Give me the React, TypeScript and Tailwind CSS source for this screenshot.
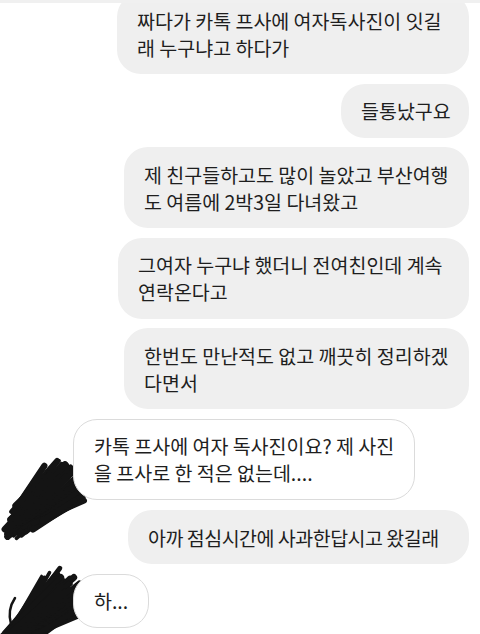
import React from 'react';

type Seg = { x1: number; y1: number; x2: number; y2: number; w: number };

// tiny deterministic rng so the scribble looks the same every render
const rng = (seed: number) => {
  let s = seed;
  return () => {
    s = (s * 9301 + 49297) % 233280;
    return s / 233280;
  };
};

const makeScribble = (seed: number, ax: number, ay: number, bx: number, by: number, half: number, count: number): Seg[] => {
  const r = rng(seed);
  const dx = bx - ax;
  const dy = by - ay;
  const len = Math.hypot(dx, dy);
  const ux = dx / len;
  const uy = dy / len;
  const nx = -uy;
  const ny = ux;
  const out: Seg[] = [];
  for (let i = 0; i < count; i++) {
    const t = -half + (2 * half * i) / (count - 1);
    const edge = Math.abs(t) / half;
    // the lower-left end tapers more than the upper-right one
    const s1 = r() * len * 0.12 + edge * edge * len * 0.3;
    const s2 = len - (r() * len * 0.18 + edge * edge * len * 0.1) + r() * 10;
    const t1 = t * 0.6 + (r() - 0.5) * 8;
    const t2 = t * 1.1 + (r() - 0.5) * 10;
    out.push({
      x1: ax + ux * s1 + nx * t1,
      y1: ay + uy * s1 + ny * t1,
      x2: ax + ux * s2 + nx * t2,
      y2: ay + uy * s2 + ny * t2,
      w: 3 + r() * 4,
    });
  }
  return out;
};

const scribbleA = makeScribble(7, 6, 96, 74, 34, 22, 46);
const scribbleB = makeScribble(31, 4, 96, 74, 34, 23, 46);

const Scribble = ({ segs, extra }: { segs: Seg[]; extra?: React.ReactNode }) => (
  <svg width="95" height="120" viewBox="0 0 95 120" className="block">
    {segs.map((s, i) => (
      <line
        key={i}
        x1={s.x1}
        y1={s.y1}
        x2={s.x2}
        y2={s.y2}
        stroke="#141414"
        strokeWidth={s.w}
        strokeLinecap="round"
      />
    ))}
    {extra}
  </svg>
);

const Sent = ({ lines, w, className = '' }: { lines: string[]; w?: string; className?: string }) => (
  <div className={`self-end bg-[#efefef] rounded-[24px] px-5 py-[13.5px] leading-[27px] ${w ?? ''} ${className}`}>
    {lines.map((l, i) => (
      <div key={i} className="whitespace-nowrap">
        {l}
      </div>
    ))}
  </div>
);

export default function App() {
  return (
    <div className="relative h-[634px] w-[480px] overflow-hidden bg-white font-['Noto_Sans_CJK_KR',sans-serif] text-[19.5px] text-[#1e1e1e]">
      <div className="absolute left-0 top-0 z-10 h-[3px] w-full bg-[#f0f0f0]" />

      <div className="mt-[-7px] flex flex-col gap-[9.5px] pr-[11px]">
        <Sent w="w-[352px]" lines={['짜다가 카톡 프사에 여자독사진이 잇길', '래 누구냐고 하다가']} />
        <Sent w="w-[128px]" lines={['들통났구요']} />
        <Sent w="w-[345px]" lines={['제 친구들하고도 많이 놀았고 부산여행', '도 여름에 2박3일 다녀왔고']} />
        <Sent w="w-[351px]" lines={['그여자 누구냐 했더니 전여친인데 계속', '연락온다고']} />
        <Sent w="w-[345px]" lines={['한번도 만난적도 없고 깨끗히 정리하겠', '다면서']} />

        {/* received */}
        <div className="relative pl-[73px]">
          <div className="absolute left-0 top-[20px]">
            <Scribble segs={scribbleA} />
          </div>
          <div className="relative w-[342px] rounded-[24px] border border-[#dbdbdb] bg-white px-5 py-[12.5px] leading-[27px]">
            <div className="whitespace-nowrap">카톡 프사에 여자 독사진이요? 제 사진</div>
            <div className="whitespace-nowrap">을 프사로 한 적은 없는데....</div>
          </div>
        </div>

        <Sent w="w-[341px]" className="mt-[1px] tracking-[-0.5px]" lines={['아까 점심시간에 사과한답시고 왔길래']} />

        <div className="relative pl-[73px]">
          <div className="absolute left-0 top-[-22px]">
            <Scribble
              segs={scribbleB}
              extra={<path d="M15 46 Q7 58 11 72" fill="none" stroke="#141414" strokeWidth="2.5" strokeLinecap="round" />}
            />
          </div>
          <div className="relative inline-block rounded-[24px] border border-[#dbdbdb] bg-white px-5 py-[12.5px] leading-[27px]">
            하...
          </div>
        </div>
      </div>
    </div>
  );
}
